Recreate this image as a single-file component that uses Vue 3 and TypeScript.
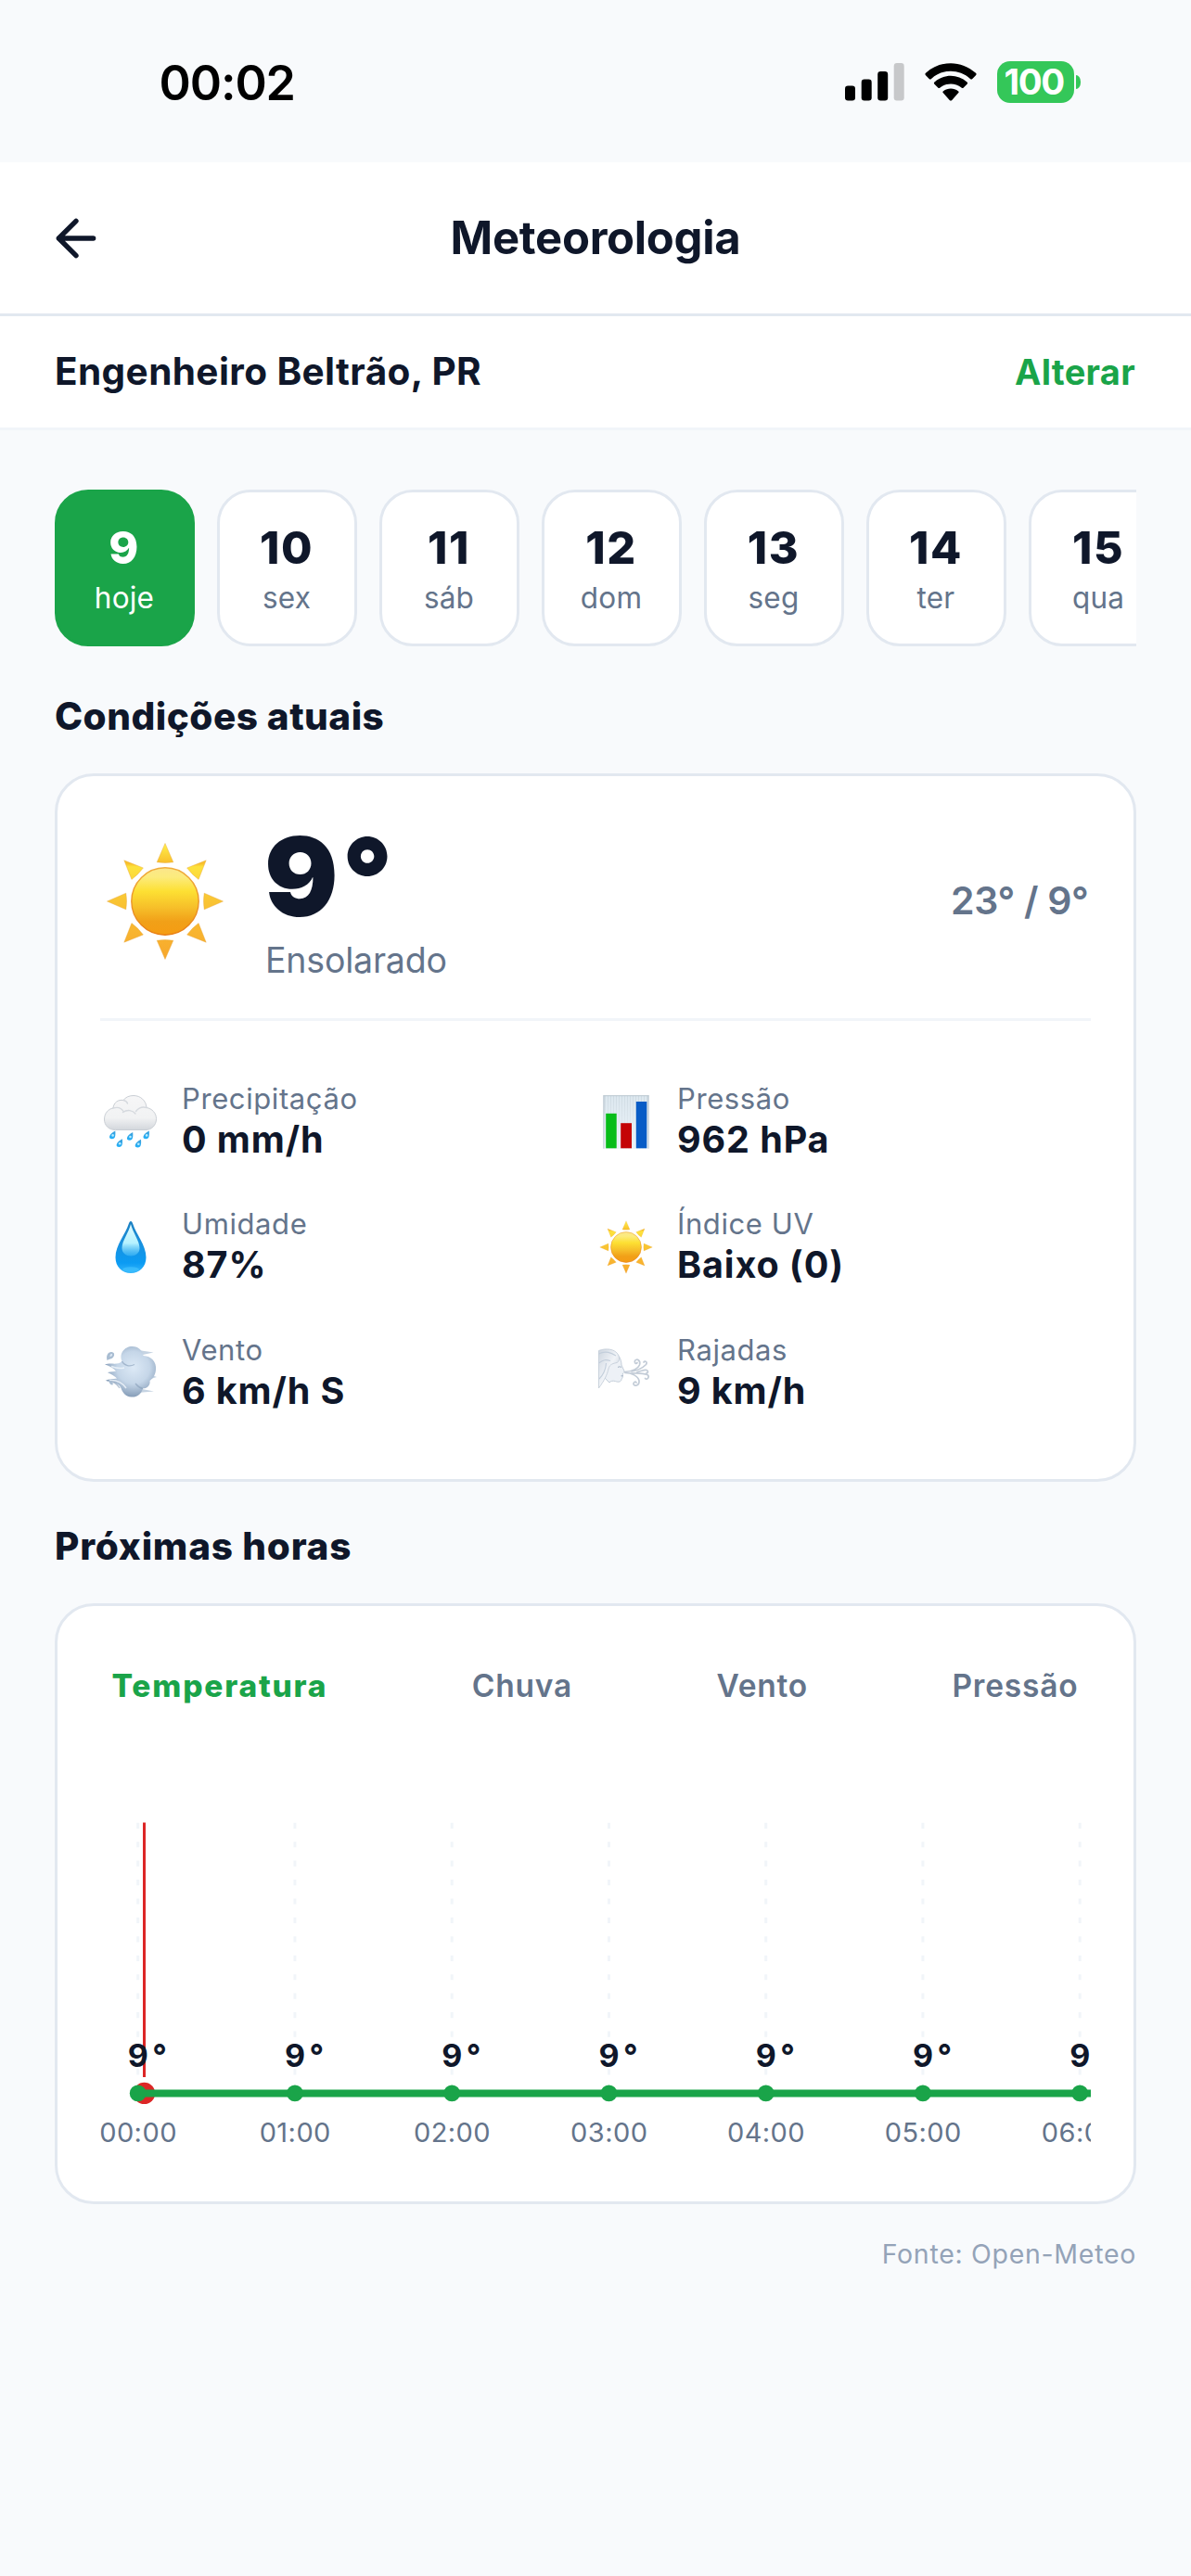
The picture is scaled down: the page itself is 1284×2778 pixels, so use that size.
<script setup lang="ts">
interface Day { num: number; label: string }
interface Metric { icon: 'rain' | 'chart' | 'drop' | 'sun' | 'wind' | 'face'; label: string; value: string }

const days: Day[] = [
  { num: 9, label: 'hoje' },
  { num: 10, label: 'sex' },
  { num: 11, label: 'sáb' },
  { num: 12, label: 'dom' },
  { num: 13, label: 'seg' },
  { num: 14, label: 'ter' },
  { num: 15, label: 'qua' },
]

const metrics: Metric[] = [
  { icon: 'rain', label: 'Precipitação', value: '0 mm/h' },
  { icon: 'chart', label: 'Pressão', value: '962 hPa' },
  { icon: 'drop', label: 'Umidade', value: '87%' },
  { icon: 'sun', label: 'Índice UV', value: 'Baixo (0)' },
  { icon: 'wind', label: 'Vento', value: '6 km/h S' },
  { icon: 'face', label: 'Rajadas', value: '9 km/h' },
]

const tabs = ['Temperatura', 'Chuva', 'Vento', 'Pressão']

const START_X = 40.7
const STEP = 169.25
const hours = Array.from({ length: 7 }, (_, i) => ({
  x: START_X + i * STEP,
  time: `${String(i).padStart(2, '0')}:00`,
  temp: '9°',
}))

// Sun rays as upright triangles around the disc, so one vertical gradient shades them all.
const rays = Array.from({ length: 8 }, (_, i) => {
  const a = (i * Math.PI) / 4
  const at = (r: number, t: number) =>
    `${(64 + r * Math.cos(a) - t * Math.sin(a)).toFixed(2)} ${(64 + r * Math.sin(a) + t * Math.cos(a)).toFixed(2)}`
  return `M${at(62.5, 0)}L${at(42.2, 8.8)}Q${at(40.8, 0)} ${at(42.2, -8.8)}Z`
}).join('')
</script>

<template>
  <div class="screen">
    <svg class="defs" width="0" height="0" aria-hidden="true">
      <defs>
        <linearGradient id="rayFill" gradientUnits="userSpaceOnUse" x1="0" y1="2" x2="0" y2="126">
          <stop offset="0" stop-color="#fff04a" />
          <stop offset=".17" stop-color="#f8bd2a" />
          <stop offset=".2" stop-color="#fde23c" />
          <stop offset=".5" stop-color="#f9c433" />
          <stop offset="1" stop-color="#f7a72c" />
        </linearGradient>
        <linearGradient id="discFill" x1="0" y1="0" x2="0" y2="1">
          <stop offset="0" stop-color="#fbe68c" />
          <stop offset=".14" stop-color="#fceb7c" />
          <stop offset=".35" stop-color="#fde033" />
          <stop offset=".6" stop-color="#f6be29" />
          <stop offset=".8" stop-color="#f1a018" />
          <stop offset="1" stop-color="#f59c12" />
        </linearGradient>
        <linearGradient id="discRim" x1="0" y1="0" x2="0" y2="1">
          <stop offset="0" stop-color="#f0ad3c" />
          <stop offset="1" stop-color="#e87d13" />
        </linearGradient>
        <symbol id="sun" viewBox="0 0 128 128">
          <path :d="rays" fill="url(#rayFill)" stroke="#e8a53c" stroke-width=".7" stroke-opacity=".6" />
          <circle cx="64" cy="64" r="36.2" fill="url(#discFill)" stroke="url(#discRim)" stroke-width="1.4" />
        </symbol>
        <linearGradient id="cloudFill" x1="0" y1="0" x2="0" y2="1">
          <stop offset="0" stop-color="#f6f6f7" />
          <stop offset=".65" stop-color="#f1f2f3" />
          <stop offset="1" stop-color="#d3d7dc" />
        </linearGradient>
        <linearGradient id="rainFill" x1="0" y1="0" x2="0" y2="1">
          <stop offset="0" stop-color="#3f9fd8" />
          <stop offset="1" stop-color="#22b1fb" />
        </linearGradient>
        <linearGradient id="dropFill" x1="0" y1="0" x2="0" y2="1">
          <stop offset="0" stop-color="#1a7fc0" />
          <stop offset=".4" stop-color="#1a90dd" />
          <stop offset=".8" stop-color="#0b9bf3" />
          <stop offset="1" stop-color="#35b6fb" />
        </linearGradient>
        <linearGradient id="dropShine" x1="0" y1="0" x2="0" y2="1">
          <stop offset="0" stop-color="#e4fbff" />
          <stop offset=".6" stop-color="#b4f2ff" />
          <stop offset="1" stop-color="#5cc9fc" stop-opacity=".4" />
        </linearGradient>
        <radialGradient id="puff" cx=".56" cy=".42" r=".58">
          <stop offset="0" stop-color="#dce9f6" />
          <stop offset=".55" stop-color="#c5d6e8" />
          <stop offset="1" stop-color="#869db8" />
        </radialGradient>
        <linearGradient id="paper" x1="0" y1="0" x2="0" y2="1">
          <stop offset="0" stop-color="#cfdbe3" />
          <stop offset="1" stop-color="#edf3f8" />
        </linearGradient>
        <linearGradient id="hairFill" x1="0" y1="0" x2="1" y2="1">
          <stop offset="0" stop-color="#cdd5df" />
          <stop offset=".5" stop-color="#f1f4f8" />
          <stop offset="1" stop-color="#b4c0ce" />
        </linearGradient>
      </defs>
    </svg>

    <div class="status">
      <span class="clock">00:02</span>
      <div class="indicators">
        <svg class="signal" viewBox="0 0 64 41" width="64" height="41">
          <rect x="0" y="24.5" width="11" height="16" rx="3.2" />
          <rect x="17.7" y="17.5" width="11" height="23" rx="3.2" />
          <rect x="35.2" y="9" width="11" height="31.5" rx="3.2" />
          <rect x="52.7" y="0" width="11" height="40.5" rx="3.2" fill="#c7c8ca" />
        </svg>
        <svg class="wifi" viewBox="0 0 56 41" width="56" height="41">
          <path d="M1 13.2Q-.2 11.9 1 10.8C16.5-3.4 39.5-3.4 55 10.8Q56.2 11.9 55 13.2L51.3 16.9Q50.2 17.9 49 16.9C37 6.1 19 6.1 7 16.9Q5.8 17.9 4.7 16.9Z" />
          <path d="M10.4 22.7Q9.3 21.5 10.5 20.4C20.5 11.6 35.5 11.6 45.5 20.4Q46.7 21.5 45.6 22.7L41.8 26.5Q40.7 27.5 39.5 26.5C33 21 23 21 16.5 26.5Q15.3 27.5 14.2 26.5Z" />
          <path d="M19.9 32.3Q18.7 31.1 20 30.2C24.7 26.7 31.3 26.7 36 30.2Q37.3 31.1 36.1 32.3L29.3 39.9Q28 41.2 26.7 39.9Z" />
        </svg>
        <div class="battery"><span class="level">100</span><i class="nub"></i></div>
      </div>
    </div>

    <header class="topbar">
      <svg class="back" viewBox="0 0 24 24" width="64" height="64" fill="none" stroke="#0f172a" stroke-width="2" stroke-linecap="round" stroke-linejoin="round">
        <path d="M12 19l-7-7 7-7M19 12H5" />
      </svg>
      <h1>Meteorologia</h1>
    </header>

    <div class="place">
      <span class="city">Engenheiro Beltrão, PR</span>
      <span class="change">Alterar</span>
    </div>

    <main>
      <div class="days">
        <div v-for="(d, i) in days" :key="d.num" class="day" :class="{ active: i === 0 }">
          <b>{{ d.num }}</b>
          <span>{{ d.label }}</span>
        </div>
      </div>

      <h2>Condições atuais</h2>
      <section class="card now">
        <div class="summary">
          <svg class="big-sun" width="128" height="128"><use href="#sun" /></svg>
          <div class="reading">
            <strong>9°</strong>
            <span>Ensolarado</span>
          </div>
          <span class="range">23° / 9°</span>
        </div>
        <div class="metrics">
          <div v-for="m in metrics" :key="m.label" class="metric">
            <div class="icon">
              <svg v-if="m.icon === 'rain'" width="58" height="58" viewBox="0 0 58 58">
                <path d="M12.5 37.5C5 37.5 .5 32.5 .5 26C.5 19.5 5 14.8 10 14C10.5 8 15.5 4.5 21 5.5C23.5 2 27.5 .5 32 .5C39.5 .5 45.5 6 46 13.5C52 14.5 56.5 19.5 56.5 25.5C56.5 32.5 51.5 37.5 45 37.5Z" fill="url(#cloudFill)" stroke="#c9ced4" stroke-width="1" />
                <path d="M10 14C15 12.5 19 14 21 17.5M20.5 18.5C25 15.5 31 16 34 20M34.5 17.5C38 13 42.5 12.5 46 13.5M21 5.5C23.5 6 25 7.5 25.5 9" fill="none" stroke="#d5d9de" stroke-width="1.4" stroke-linecap="round" />
                <g fill="url(#rainFill)">
                  <path d="M12.3 38.5C12.6 43 12.6 47.3 8.8 47.3C4.5 47.3 4.7 42.6 12.3 38.5Z" />
                  <path d="M19.9 47.3C20.2 51.8 20.2 56 16.4 56C12.1 56 12.3 51.4 19.9 47.3Z" />
                  <path d="M31.2 40C31.5 44.5 31.5 48.8 27.7 48.8C23.4 48.8 23.6 44.1 31.2 40Z" />
                  <path d="M40 47.8C40.3 52.3 40.3 56.5 36.5 56.5C32.2 56.5 32.4 51.9 40 47.8Z" />
                  <path d="M48.8 38.5C49.1 43 49.1 47.3 45.3 47.3C41 47.3 41.2 42.6 48.8 38.5Z" />
                </g>
                <g fill="#b9ecff"><circle cx="9.6" cy="43.4" r="1.3" /><circle cx="17.2" cy="52.2" r="1.3" /><circle cx="28.5" cy="45" r="1.3" /><circle cx="37.3" cy="52.7" r="1.3" /><circle cx="46.1" cy="43.4" r="1.3" /></g>
              </svg>
              <svg v-else-if="m.icon === 'chart'" width="58" height="58" viewBox="0 0 58 58">
                <rect x="4.5" y=".3" width="49" height="57.4" fill="url(#paper)" />
                <path d="M8 .3V58M11 .3V58M14 .3V58M17 .3V58M20 .3V58M23 .3V58M26 .3V58M29 .3V58M32 .3V58M35 .3V58M38 .3V58M41 .3V58M44 .3V58M47 .3V58M50 .3V58" stroke="#e6f0f7" stroke-width="1.2" />
                <path d="M4.9 .3V57.7M53 .3V57.7M4.5 .7H53.5" stroke="#bcc8d1" stroke-width="1" />
                <rect x="7.2" y="19.8" width="11.5" height="37.5" fill="#07bd19" />
                <rect x="23.2" y="30.2" width="11.8" height="27.1" fill="#c40406" />
                <rect x="39.8" y="7" width="11.5" height="50.3" fill="#085cc6" />
              </svg>
              <svg v-else-if="m.icon === 'drop'" width="58" height="58" viewBox="0 0 58 58">
                <path d="M29 1C30.2 1 30.8 2.5 31.3 4C34.5 14.5 45.5 26.5 45.5 40C45.5 50 38.5 57 29 57S12.5 50 12.5 40C12.5 26.5 23.5 14.5 26.7 4C27.2 2.5 27.8 1 29 1Z" fill="url(#dropFill)" />
                <path d="M29 4C31 13 38.5 22 38.5 30C38.5 35.5 34 38.5 29 38.5S19.5 35.5 19.5 30C19.5 22 27 13 29 4Z" fill="url(#dropShine)" />
                <ellipse cx="29" cy="53" rx="9" ry="2.8" fill="#3fc0fd" opacity=".75" />
              </svg>
              <svg v-else-if="m.icon === 'sun'" width="58" height="58"><use href="#sun" /></svg>
              <svg v-else-if="m.icon === 'wind'" width="58" height="58" viewBox="0 0 58 58">
                <path d="M34 4.5L53.5 7.5L42 10ZM47 30L57 34L44 38ZM36 46L54 49.5L36 51Z" fill="#c5d3e2" />
                <path d="M1 20.5C8 18 14 22 19.5 17C16 9 22 1 30.5 1C37.5 1 41.5 5.5 42.5 11C51 11.5 57 17.5 56 26C55.5 33 52 36 49.5 38C50.5 43 46 46.5 42 46.5C40 53 35.5 56 29.5 55.5C23 55 20 50.5 18.5 46C16.5 41 9 38.5 1.5 37.5C6 36 10 36.5 14 35.5C10 31.5 6 30 4 29C8 28 10 28.5 13 27.5C9 23.5 5 21.5 1 20.5Z" fill="url(#puff)" />
                <path d="M19.5 17C22 22 28 23 33 20.5M34 41C37 45 40 46 42 46.5M3 38C9 38 14 41 17 46" fill="none" stroke="#869db8" stroke-width="1.3" opacity=".6" />
                <path d="M6 37.5C14 37 20 40 24 46M8 22.5C14 25 18 25 22 24" fill="none" stroke="#f2f7fc" stroke-width="1.5" opacity=".8" />
                <path d="M3.5 16C2 11 4.5 6.5 8.5 7C12.5 7.5 11.5 12.5 8.5 14C6.5 15 4.5 15 3.5 16ZM5 37.5C9 38 10.5 40.5 9.5 42.5C7.5 43 5.5 40.5 5 37.5Z" fill="#a9bdd2" />
                <path d="M6.5 12C6.5 9.5 8 8.5 9 9.5C9.5 10.5 8 12 6.5 12Z" fill="#dfeaf5" />
              </svg>
              <svg v-else class="face" width="58" height="58" viewBox="0 0 58 58">
                <path d="M16 5C22 7 25 13 25 19L28 25.5C28.5 26.8 27 27.5 26.5 28L26 31C27 32.5 25 34 25 34.5C25 37 21.5 38 18.5 36.5C15.5 36 13.5 36 12 38L6 32L4 10Z" fill="#edf1f6" stroke="#bdc8d5" stroke-width=".9" />
                <path d="M.5 3.5C8 .5 18 1.5 21.5 8C23.5 12 22.5 15.5 20 16.5C16.5 17.5 12.5 17.5 11 23C9.5 30 6 36.5 .5 44Z" fill="url(#hairFill)" stroke="#c0cad6" stroke-width=".8" />
                <path d="M.5 7C8 3 14 6 19 9M.5 17C6 13 8 13 13 14.5M1 34C6 29 8 24 8.5 17" fill="none" stroke="#c3cedb" stroke-width="1.1" />
                <path d="M21 21.5C22.5 20.5 24 20.8 25 21.5M24.5 30.8H27" stroke="#a4b2c3" stroke-width="1" fill="none" />
                <path d="M28.5 26.5C35 26 42 25 44.5 19C46 14 41.5 11.5 39.5 14.5C38.5 17 41 18.5 42 16.5M29 27.5C36 27.5 43 31 44 36C44.5 41.5 38.5 42.5 38 39.5C37.8 37.5 40 36.5 41 38M36 26C44 24.5 48 22 51.5 18.5C53.5 15.5 50 14 49 16M34 28C42 27.5 48 27.5 53 29.5C56 32 52.5 35.5 50.5 33.5M42 26.5C47 25.5 49 24 52 24.5C54.5 25.5 53.5 28 52 27.5" fill="none" stroke="#c3ccd7" stroke-width="1.7" stroke-linecap="round" />
              </svg>
            </div>
            <div class="info">
              <span>{{ m.label }}</span>
              <b>{{ m.value }}</b>
            </div>
          </div>
        </div>
      </section>

      <h2>Próximas horas</h2>
      <section class="card hours">
        <div class="tabs">
          <span v-for="(t, i) in tabs" :key="t" :class="{ on: i === 0 }">{{ t }}</span>
        </div>
        <svg class="plot" width="1068" height="400" viewBox="0 0 1068 400">
          <line v-for="h in hours" :key="'g' + h.time" :x1="h.x" y1="45.7" :x2="h.x" y2="320" stroke="#f1f5f9" stroke-width="3" stroke-dasharray="6.2 14.23" />
          <line x1="47.5" y1="45.5" x2="47.5" y2="320" stroke="#dc2626" stroke-width="3" />
          <circle cx="47.5" cy="337.4" r="11.7" fill="#dc2626" />
          <line :x1="hours[0].x" y1="337.4" x2="1068" y2="337.4" stroke="#1aa449" stroke-width="8" />
          <g v-for="h in hours" :key="h.time">
            <circle :cx="h.x" cy="337.4" r="8.9" fill="#1aa449" />
            <text class="temp" :x="h.x - 11" y="308.5">{{ h.temp }}</text>
            <text class="time" :x="h.x + 0.3" y="390">{{ h.time }}</text>
          </g>
        </svg>
      </section>

      <p class="source">Fonte: Open-Meteo</p>
    </main>
  </div>
</template>

<style>
body { background: #f8fafc; }
</style>

<style scoped>
.screen {
  width: 1284px;
  height: 2778px;
  background: #f8fafc;
  color: #0f172a;
  font-family: Inter, "Liberation Sans", sans-serif;
  overflow: hidden;
  display: flex;
  flex-direction: column;
}
.defs { position: absolute; }
h1, h2, p { margin: 0; }

.status {
  height: 175px;
  flex: none;
  box-sizing: border-box;
  padding: 66px 119px 0 171.5px;
  display: flex;
  justify-content: space-between;
  align-items: flex-start;
}
.clock {
  font-size: 52px;
  font-weight: 600;
  line-height: 48px;
  letter-spacing: -1.1px;
  color: #000;
}
.indicators { display: flex; align-items: flex-start; }
.signal { margin: 2px 22px 0 0; }
.wifi { margin: 2px 22px 0 0; }
.battery {
  position: relative;
  width: 83px;
  height: 44.5px;
  border-radius: 14px;
  background: #34c759;
  display: flex;
  align-items: center;
  justify-content: center;
  margin-right: 7px;
}
.level {
  color: #fff;
  font-size: 38.5px;
  font-weight: 700;
  line-height: 44px;
  letter-spacing: -1.4px;
  margin-right: 3.5px;
}
.nub {
  position: absolute;
  left: 85px;
  top: 15px;
  width: 5px;
  height: 14.5px;
  border-radius: 0 5px 5px 0 / 0 7px 7px 0;
  background: #34c759;
}

.topbar {
  height: 166px;
  flex: none;
  box-sizing: border-box;
  background: #fff;
  border-bottom: 3px solid #e2e8f0;
  display: grid;
  grid-template-columns: 65px 1fr 65px;
  align-items: center;
  padding: 0 49.5px;
}
.back { display: block; }
h1 {
  font-size: 49px;
  font-weight: 660;
  line-height: 60px;
  letter-spacing: -.3px;
  text-align: center;
  margin-top: 1px;
}

.place {
  height: 123px;
  flex: none;
  box-sizing: border-box;
  background: #fff;
  border-bottom: 3px solid #f1f5f9;
  display: flex;
  align-items: baseline;
  justify-content: space-between;
  padding: 35px 60px 0 59px;
  line-height: 50px;
}
.city { font-size: 40.5px; font-weight: 660; letter-spacing: .4px; }
.change { font-size: 38px; font-weight: 650; letter-spacing: .3px; color: #1aa449; }

main { padding: 64px 59px 0; }

.days { display: flex; gap: 24px; overflow: hidden; }
.day {
  flex: none;
  width: 151px;
  height: 169px;
  box-sizing: border-box;
  border: 3px solid #e2e8f0;
  border-radius: 36px;
  background: #fff;
  display: flex;
  flex-direction: column;
  align-items: center;
  padding: 31px 1px 0 0;
}
.day b { font-size: 48.5px; font-weight: 800; line-height: 57px; letter-spacing: 1.6px; }
.day span { font-size: 31.5px; line-height: 44px; margin-top: 4px; letter-spacing: .2px; color: #64748b; }
.day.active { background: #1aa449; border-color: #1aa449; color: #fff; }
.day.active span { color: #fff; }

h2 {
  font-size: 40.5px;
  font-weight: 800;
  line-height: 50px;
  letter-spacing: .5px;
  margin: 51px 0 36px;
}

.card {
  box-sizing: border-box;
  background: #fff;
  border: 3px solid #e2e8f0;
  border-radius: 42px;
  padding: 0 46px;
}
.now { height: 764px; }
.summary {
  display: flex;
  align-items: center;
  height: 264px;
  box-sizing: border-box;
  border-bottom: 3px solid #f1f5f9;
  padding: 14px 0 0 6px;
}
.big-sun { margin-top: -5px; }
.reading { display: flex; flex-direction: column; margin-left: 43px; }
.reading strong { font-size: 118px; font-weight: 900; line-height: 114px; letter-spacing: 4px; }
.reading span { font-size: 37.5px; line-height: 50px; letter-spacing: -.2px; margin-top: 9px; color: #64748b; padding-left: 1px; }
.range { margin: -8px 2.5px 0 auto; font-size: 41px; font-weight: 620; line-height: 50px; letter-spacing: -.35px; color: #64748b; }

.metrics {
  display: grid;
  grid-template-columns: 1fr 1fr;
  row-gap: 49.3px;
  padding-top: 64px;
}
.metric { display: flex; align-items: center; gap: 23px; height: 86px; }
.icon { width: 65px; display: flex; justify-content: center; margin-top: 3px; }
.icon svg { display: block; }
.face { margin: 4px 0 0 -1px; }
.info { display: flex; flex-direction: column; }
.info span { font-size: 31px; line-height: 40px; letter-spacing: .6px; color: #64748b; }
.info b { font-size: 39.5px; font-weight: 700; line-height: 44px; letter-spacing: .9px; margin-top: 2px; }

.now + h2 { margin-top: 45px; letter-spacing: .75px; }

.hours { height: 648px; }
.tabs {
  display: flex;
  justify-content: space-between;
  padding: 64px 13.5px 0 12.5px;
  font-size: 33.5px;
  font-weight: 620;
  line-height: 44px;
  letter-spacing: .8px;
  color: #64748b;
}
.tabs .on { font-weight: 780; letter-spacing: 1.8px; color: #1aa449; }
.plot { display: block; margin-top: 80px; overflow: hidden; }
.temp { font-size: 34px; font-weight: 700; letter-spacing: 4.5px; fill: #0f172a; }
.time { font-size: 29px; letter-spacing: .44px; text-anchor: middle; fill: #64748b; }

.source {
  margin-top: 33.5px;
  text-align: right;
  font-size: 28.5px;
  line-height: 40px;
  letter-spacing: .7px;
  color: #94a3b8;
}
</style>
